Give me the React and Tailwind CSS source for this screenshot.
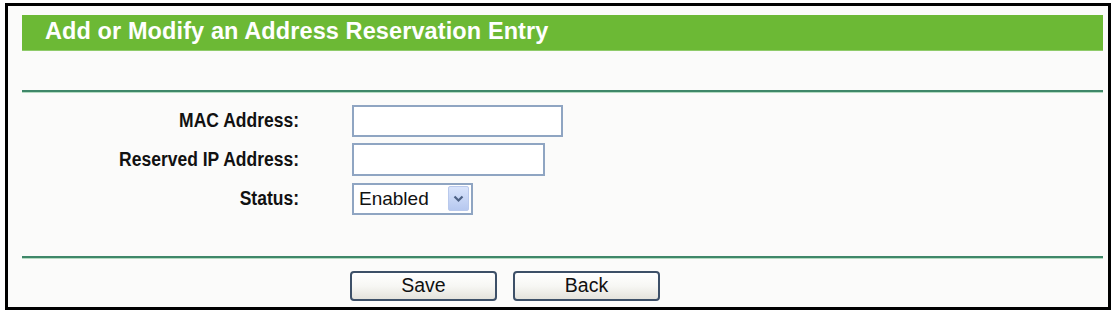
import React from "react";

const font = { fontFamily: '"Liberation Sans", Arial, sans-serif' };

function Line() {
  return (
    <div className="flex flex-col">
      <div className="h-[2px] bg-[#3f8769]" />
      <div className="h-[1px] bg-[#b5dcc2]" />
    </div>
  );
}

function Row({ label, children }) {
  return (
    <div className="flex items-center h-[33px]">
      <div className="w-[278px] text-right font-bold text-[17.5px] text-[#111] leading-none pr-[1px] scale-y-[1.12] origin-right">
        {label}
      </div>
      <div className="ml-[52px] flex items-center">{children}</div>
    </div>
  );
}

function Button({ children }) {
  return (
    <div className="w-[147px] h-[30px] rounded-[4px] border-2 border-[#3d5068] bg-gradient-to-b from-white via-[#f7f7f4] to-[#e4e3dc] flex items-center justify-center text-[19.5px] text-[#111] leading-none">
      {children}
    </div>
  );
}

export default function App() {
  return (
    <div className="w-[1112px] h-[315px] bg-white pt-[3px] pl-[5px]" style={font}>
      <div className="w-[1106px] h-[307px] border-[3px] border-black bg-[#fbfbfa] pl-[14px] pr-[5px] pt-[9px] flex flex-col">
        <div className="h-[36px] bg-[#6cb935] border-b border-[#8fcb6a] flex items-center pl-[23px] pb-[2px]">
          <span className="text-white font-bold text-[23.5px] tracking-[0.1px] leading-none">
            Add or Modify an Address Reservation Entry
          </span>
        </div>
        <div className="h-[39px]" />
        <Line />
        <div className="flex flex-col gap-[6px] pt-[11px]">
          <Row label="MAC Address:">
            <div className="w-[211px] h-[32px] border-2 border-[#8fa5c2] bg-white" />
          </Row>
          <Row label="Reserved IP Address:">
            <div className="w-[193px] h-[33px] border-2 border-[#8fa5c2] bg-white" />
          </Row>
          <Row label="Status:">
            <div className="w-[121px] h-[32px] border-2 border-[#8fa5c2] bg-white flex items-center pl-[5px] pr-[2px]">
              <span className="text-[19px] text-[#111] leading-none flex-1">Enabled</span>
              <div className="w-[21px] h-[25px] rounded-[2px] bg-gradient-to-b from-[#d9e4fb] to-[#b6c8f0] border border-[#b9c9ec] flex items-center justify-center">
                <svg width="11" height="8" viewBox="0 0 11 8">
                  <path d="M1.5 1.5 L5.5 5.5 L9.5 1.5" fill="none" stroke="#4d6185" strokeWidth="2.2" />
                </svg>
              </div>
            </div>
          </Row>
        </div>
        <div className="h-[41px]" />
        <Line />
        <div className="flex gap-[16px] pl-[328px] pt-[12px]">
          <Button>Save</Button>
          <Button>Back</Button>
        </div>
      </div>
    </div>
  );
}
